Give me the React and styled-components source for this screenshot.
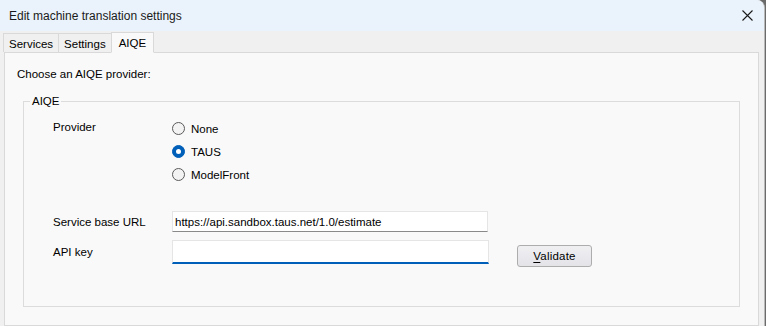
import React from "react";
import styled, { createGlobalStyle } from "styled-components";

const Global = createGlobalStyle`
  html, body { margin: 0; padding: 0; background: #6b6b6b; }
  body { font-family: "Segoe UI", "Liberation Sans", Arial, sans-serif; font-size: 11px; color: #000; }
  * { box-sizing: border-box; }
`;

const Window = styled.div`
  width: 765px;
  height: 326px;
  background: #f0f0f0;
  border-right: 1px solid #b9b9b9;
  border-top-right-radius: 8px;
  overflow: hidden;
  display: flex;
  flex-direction: column;
`;

const TitleBar = styled.div`
  height: 31px;
  flex: none;
  background: #eaf3fb;
  display: flex;
  align-items: center;
  justify-content: space-between;
  padding: 0 8px 0 9px;
`;

const Title = styled.div`
  font-size: 12px;
  color: #1a1a1a;
  margin-top: 1px;
`;

const Close = styled.div`
  width: 14px;
  height: 14px;
  display: flex;
  align-items: center;
  justify-content: center;
  margin-right: 2px;
`;

const Body = styled.div`
  flex: 1;
  padding: 0 5px 0 4px;
  display: flex;
  flex-direction: column;
`;

const Tabs = styled.div`
  display: flex;
  align-items: flex-end;
  height: 21px;
  margin-left: -1px;
  position: relative;
  z-index: 1;
`;

const Tab = styled.div`
  height: ${(p) => (p.$active ? "21px" : "19px")};
  padding: 0 ${(p) => (p.$active ? "7px" : "5px")};
  background: ${(p) => (p.$active ? "#f9f9f9" : "#f0f0f0")};
  border: 1px solid #d9d9d9;
  border-bottom: ${(p) => (p.$active ? "1px solid #f9f9f9" : "none")};
  margin-left: ${(p) => (p.$first ? "0" : "-1px")};
  display: flex;
  align-items: center;
  font-size: 11.5px;
  color: #000;
  padding-top: ${(p) => (p.$active ? "0" : "1px")};
  margin-bottom: ${(p) => (p.$active ? "-1px" : "0")};
`;

const Panel = styled.div`
  flex: 1;
  background: #f9f9f9;
  border: 1px solid #d9d9d9;
  padding: 15px 19px 0 12px;
`;

const Intro = styled.div`
  margin-bottom: 14px;
  font-size: 11.5px;
`;

const Group = styled.fieldset`
  margin: 0 0 0 6px;
  padding: 0 0 0 29px;
  border: 1px solid #dcdcdc;
  height: 213px;
  width: 717px;
`;

const Legend = styled.legend`
  margin-left: -23px;
  padding: 0 2px;
  font-size: 11.5px;
  line-height: 14px;
`;

const Row = styled.div`
  display: flex;
  align-items: ${(p) => p.$align || "center"};
  margin-top: ${(p) => p.$mt || 0}px;
`;

const Label = styled.div`
  width: 119px;
  flex: none;
  font-size: 11.5px;
  padding-top: ${(p) => p.$pt || 0}px;
`;

const RadioList = styled.div`
  display: flex;
  flex-direction: column;
  font-size: 11.5px;
`;

const RadioItem = styled.div`
  display: flex;
  align-items: center;
  height: 23px;
`;

const Circle = styled.span`
  width: 13px;
  height: 13px;
  border-radius: 50%;
  flex: none;
  margin-right: 6px;
  display: flex;
  align-items: center;
  justify-content: center;
  border: 1px solid ${(p) => (p.$checked ? "#005fb8" : "#5a5a5a")};
  background: ${(p) => (p.$checked ? "#005fb8" : "#f3f3f3")};
  &::after {
    content: "";
    display: ${(p) => (p.$checked ? "block" : "none")};
    width: 5px;
    height: 5px;
    border-radius: 50%;
    background: #fff;
  }
`;

const Input = styled.div`
  width: ${(p) => p.$w}px;
  height: ${(p) => p.$h}px;
  background: #fff;
  border: 1px solid #e5e5e5;
  border-bottom: ${(p) => (p.$focused ? "2px solid #005fb8" : "1px solid #8a8a8a")};
  padding: 0 0 0 2px;
  display: flex;
  align-items: center;
  font-size: 11.5px;
  color: #000;
`;

const Button = styled.div`
  width: 75px;
  height: 22px;
  margin: 5px 0 0 28px;
  align-self: flex-start;
  border: 1px solid #adadad;
  border-radius: 3px;
  background: linear-gradient(#f0f0f3, #e3e3e8);
  display: flex;
  align-items: center;
  justify-content: center;
  font-size: 11.5px;
  color: #000;
  letter-spacing: 0.2px;
  & u { text-decoration: underline; text-underline-offset: 2px; }
`;

export default function App() {
  return (
    <>
      <Global />
      <Window>
        <TitleBar>
          <Title>Edit machine translation settings</Title>
          <Close>
            <svg width="11" height="11" viewBox="0 0 11 11">
              <path d="M0.5 0.5 L10.5 10.5 M10.5 0.5 L0.5 10.5" stroke="#1a1a1a" strokeWidth="1.1" />
            </svg>
          </Close>
        </TitleBar>
        <Body>
          <Tabs>
            <Tab $first>Services</Tab>
            <Tab>Settings</Tab>
            <Tab $active>AIQE</Tab>
          </Tabs>
          <Panel>
            <Intro>Choose an AIQE provider:</Intro>
            <Group>
              <Legend>AIQE</Legend>
              <Row $align="flex-start" $mt={9}>
                <Label $pt={4}>Provider</Label>
                <RadioList>
                  <RadioItem><Circle />None</RadioItem>
                  <RadioItem><Circle $checked />TAUS</RadioItem>
                  <RadioItem><Circle />ModelFront</RadioItem>
                </RadioList>
              </Row>
              <Row $mt={25}>
                <Label>Service base URL</Label>
                <Input $w={316} $h={21}>https://api.sandbox.taus.net/1.0/estimate</Input>
              </Row>
              <Row $mt={8} $align="flex-start">
                <Label $pt={6}>API key</Label>
                <Input $w={317} $h={24} $focused />
                <Button><span><u>V</u>alidate</span></Button>
              </Row>
            </Group>
          </Panel>
        </Body>
      </Window>
    </>
  );
}
